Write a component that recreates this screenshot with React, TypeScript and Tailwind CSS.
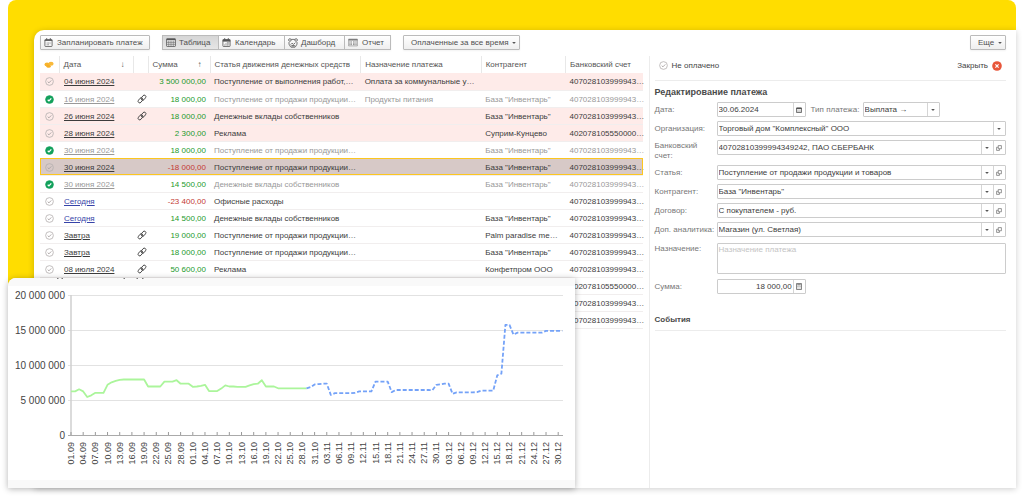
import React from 'react';
import { clsx } from 'clsx';

type RowState = 'overdue' | 'paid' | 'selected' | 'plain';

interface Payment {
  date: string;
  state: RowState;
  linked?: boolean;
  today?: boolean;
  sum: string;
  article: string;
  purpose?: string;
  partner?: string;
  account: string;
}

const ACC = '407028103999943…';
const ACC_CASH = '402078105550000…';
const SALES = 'Поступление от продажи продукции…';
const OWNERS = 'Денежные вклады собственников';
const BASE = 'База "Инвентарь"';

const payments: Payment[] = [
  { date: '04 июня 2024', state: 'overdue', sum: '3 500 000,00', article: 'Поступление от выполнения работ,…', purpose: 'Оплата за коммунальные у…', account: ACC },
  { date: '16 июня 2024', state: 'paid', linked: true, sum: '18 000,00', article: SALES, purpose: 'Продукты питания', partner: BASE, account: ACC },
  { date: '26 июня 2024', state: 'overdue', linked: true, sum: '18 000,00', article: OWNERS, partner: BASE, account: ACC },
  { date: '28 июня 2024', state: 'overdue', sum: '2 300,00', article: 'Реклама', partner: 'Суприм-Кунцево', account: ACC_CASH },
  { date: '30 июня 2024', state: 'paid', sum: '18 000,00', article: SALES, partner: BASE, account: ACC },
  { date: '30 июня 2024', state: 'selected', sum: '-18 000,00', article: SALES, partner: BASE, account: ACC },
  { date: '30 июня 2024', state: 'paid', sum: '14 500,00', article: OWNERS, partner: BASE, account: ACC },
  { date: 'Сегодня', state: 'plain', today: true, sum: '-23 400,00', article: 'Офисные расходы', account: ACC },
  { date: 'Сегодня', state: 'plain', today: true, sum: '14 500,00', article: OWNERS, partner: BASE, account: ACC },
  { date: 'Завтра', state: 'plain', linked: true, sum: '19 000,00', article: SALES, partner: 'Palm paradise me…', account: ACC },
  { date: 'Завтра', state: 'plain', linked: true, sum: '18 000,00', article: SALES, partner: BASE, account: ACC },
  { date: '08 июля 2024', state: 'plain', linked: true, sum: '50 600,00', article: 'Реклама', partner: 'Конфетпром ООО', account: ACC },
  { date: '', state: 'plain', sum: '', article: '', account: ACC_CASH },
  { date: '', state: 'plain', sum: '', article: '', account: ACC },
  { date: '', state: 'plain', sum: '', article: '', account: ACC },
];

function StatusIcon({ paid = false }: { paid?: boolean }) {
  return (
    <svg viewBox="0 0 10 10" className="size-[9px] shrink-0" aria-hidden="true">
      <circle cx="5" cy="5" r="4.3" fill={paid ? '#12a15c' : 'none'} stroke={paid ? '#12a15c' : '#b5b0b0'} strokeWidth="0.9" />
      <path d="M3 5.2 4.4 6.5 7 3.8" fill="none" stroke={paid ? '#fff' : '#a8a3a3'} strokeWidth={paid ? 1.4 : 1} />
    </svg>
  );
}

function CoinsIcon() {
  return (
    <svg viewBox="0 0 10 8" className="h-[8px] w-[10px]" aria-hidden="true">
      <ellipse cx="3" cy="3.4" rx="2.5" ry="1.9" fill="#f7b32d" />
      <ellipse cx="7" cy="2.7" rx="2.6" ry="2" fill="#f9b93a" />
      <ellipse cx="4.600" cy="5.200" rx="2.200" ry="1.500" fill="#f5ae26" />
    </svg>
  );
}

function ChainIcon() {
  return (
    <svg viewBox="0 0 10 10" className="size-[10px]" aria-hidden="true" fill="none" stroke="#444" strokeWidth=".9">
      <g transform="rotate(-52 5 5)">
        <rect x=".2" y="3" width="5.600" height="3.200" rx="1.600" />
        <rect x="4.200" y="3.800" width="5.600" height="3.200" rx="1.600" />
      </g>
    </svg>
  );
}

function CalendarIcon({ dark = false }: { dark?: boolean }) {
  return (
    <svg viewBox="0 0 10 10" className="size-[9px] shrink-0" aria-hidden="true">
      <rect x="1" y="1.800" width="8" height="7.700" rx="0.800" fill="none" stroke="#555" strokeWidth="0.900" />
      <path d={dark ? 'M.8 1.500H9.200V4H.8Z' : 'M.8 1.800H9.200V3.200H.8Z'} fill="#555" />
      <path d="M3 .2V2M7 .2V2" stroke="#555" strokeWidth="1.100" />
      <path d={dark ? 'M2.400 7.800H8M3.800 6.500H8M5.400 5.200H8' : 'M3 5.600H7.500M3 7.500H5.500'} stroke="#777" strokeWidth="0.900" strokeDasharray="1.100 .5" />
    </svg>
  );
}

function TableIcon() {
  return (
    <svg viewBox="0 0 11 10" className="h-[9px] w-[10px] shrink-0" aria-hidden="true">
      <rect x=".6" y=".8" width="9.800" height="8.600" rx=".6" fill="#eee" stroke="#555" strokeWidth=".9" />
      <path d="M.6 1.600H10.400" stroke="#555" strokeWidth="1.600" />
      <path d="M.6 4.800H10.400M.6 7H10.400M3 3V9.400M5.500 3V9.400M8 3V9.400" stroke="#666" strokeWidth=".7" />
    </svg>
  );
}

function DashboardIcon() {
  return (
    <svg viewBox="0 0 10 10" className="size-[10px] shrink-0" aria-hidden="true" fill="none" stroke="#555" strokeWidth=".8">
      <path d="M3.200 1.400H6.800M1 4V6.200M9 4V6.200M3 9.200H7" />
      <circle cx="1.900" cy="2" r="1.300" />
      <circle cx="8.100" cy="2" r="1.300" />
      <path d="M1 6.200 2.800 9.200M9 6.200 7.200 9.200M2.600 6.600 4 5.200 5.600 6.400 7.400 4.600" />
      <path d="M3.400 7.800H6.800" strokeWidth="1.200" />
    </svg>
  );
}

function ReportIcon() {
  return (
    <svg viewBox="0 0 11 10" className="h-[9px] w-[10px] shrink-0" aria-hidden="true">
      <path d="M.6 1.200H10.400V8.800H.6Z" fill="none" stroke="#888" strokeWidth=".7" />
      <path d="M.6 2H10.400" stroke="#777" strokeWidth="1.600" />
      <path d="M1.500 4.300H4.500M1.500 5.800H4.500M1.500 7.300H4.500M5.500 4.300H9.500M5.500 5.800H9.500M5.500 7.300H9.500" stroke="#777" strokeWidth=".9" strokeDasharray="1.200 .4" />
    </svg>
  );
}

function Caret() {
  return (
    <svg viewBox="0 0 4 2" className="h-[2px] w-1 shrink-0" aria-hidden="true">
      <path d="M.2 0H3.800L2 2Z" fill="#555" />
    </svg>
  );
}

function OpenIcon() {
  return (
    <svg viewBox="0 0 8 8" className="size-[6px]" aria-hidden="true" fill="none" stroke="#666" strokeWidth=".9">
      <path d="M3 .8H7.200V5H3Z" />
      <path d="M3 3H.8V7.200H4.600V5" />
    </svg>
  );
}

const buttonBase = 'flex h-[15px] items-center border border-[#bbb] bg-linear-to-b text-[#505050]';
const buttonLight = 'from-white to-[#efefef]';

function Toolbar() {
  return (
    <div className="flex items-center gap-3">
      <button className={clsx(buttonBase, buttonLight, 'w-[110px] gap-1 rounded-[1px] pl-[3px] shadow-xs')}>
        <CalendarIcon /> Запланировать платеж
      </button>
      <div className="flex shadow-xs">
        <button className={clsx(buttonBase, 'w-[57px] gap-[3px] from-[#d6d6d6] to-[#e6e6e6] pl-[3px]')}>
          <TableIcon /> Таблица
        </button>
        <button className={clsx(buttonBase, buttonLight, 'w-[66px] gap-1 border-l-0 pl-[3px]')}>
          <CalendarIcon dark /> Календарь
        </button>
        <button className={clsx(buttonBase, buttonLight, 'w-[60px] gap-[3px] border-l-0 pl-[3px]')}>
          <DashboardIcon /> Дашборд
        </button>
        <button className={clsx(buttonBase, buttonLight, 'w-[46px] gap-1 border-l-0 pl-[3px]')}>
          <ReportIcon /> Отчет
        </button>
      </div>
      <button className={clsx(buttonBase, buttonLight, 'w-[117px] justify-between rounded-[1px] pr-[3px] pl-[7px] shadow-xs')}>
        Оплаченные за все время <Caret />
      </button>
      <button className={clsx(buttonBase, buttonLight, 'ml-auto w-9 justify-between rounded-[1px] pr-[3px] pl-[7px] shadow-xs')}>
        Еще <Caret />
      </button>
    </div>
  );
}

function PaymentsTable() {
  const th = 'border-l border-[#e8e8e8] px-1 text-left font-normal text-[#555]';
  const cell = 'px-1 pt-[2px]';
  return (
    <table className="w-full table-fixed whitespace-nowrap">
      <colgroup>
        <col className="w-[19px]" />
        <col className="w-[74px]" />
        <col className="w-[15px]" />
        <col className="w-[62px]" />
        <col className="w-[25%]" />
        <col className="w-[20%]" />
        <col className="w-[14%]" />
        <col />
      </colgroup>
      <thead>
        <tr className="h-[17px]">
          <th className="pl-1" aria-label="Статус"><CoinsIcon /></th>
          <th className={th}>
            <span className="flex justify-between pr-1">Дата <span>↓</span></span>
          </th>
          <th className={th} aria-label="Связь" />
          <th className={th}>
            <span className="flex justify-between pr-1">Сумма <span>↑</span></span>
          </th>
          <th className={th}>Статья движения денежных средств</th>
          <th className={th}>Назначение платежа</th>
          <th className={th}>Контрагент</th>
          <th className={th}>Банковский счет</th>
        </tr>
      </thead>
      <tbody>
        {payments.map((p, i) => (
          <tr
            key={i}
            className={clsx(
              'h-[17px] border-b border-[#f1eeee]',
              p.state === 'overdue' && 'bg-[#feebe9]',
              p.state === 'selected' && 'bg-[#d7c9c7] outline -outline-offset-1 outline-[#fcc61f]',
              p.state === 'paid' ? 'text-[#999]' : 'text-[#3c3c3c]'
            )}
          >
            <td className="pt-px pl-[5px]">{p.date && <StatusIcon paid={p.state === 'paid'} />}</td>
            <td className="pt-[2px] pl-[5px]">
              {p.date && (
                <a href="#" className={clsx('underline', p.today && 'text-[#3643a8]')}>{p.date}</a>
              )}
            </td>
            <td className="pt-px pl-1">{p.linked && <ChainIcon />}</td>
            <td className={clsx('pt-[2px] pr-1 text-right', p.sum.startsWith('-') ? 'text-[#c43a35]' : 'text-[#249a2c]')}>{p.sum}</td>
            <td className={cell}>{p.article}</td>
            <td className={cell}>{p.purpose}</td>
            <td className={cell}>{p.partner}</td>
            <td className={cell}>{p.account}</td>
          </tr>
        ))}
      </tbody>
    </table>
  );
}

const box = 'flex h-[15px] rounded-[1px] border border-[#ccc] bg-white text-[#3c3c3c]';
const addon = 'flex w-3 shrink-0 items-center justify-center border-l border-[#d5d5d5]';

function SelectField({ id, value, openable = false, className }: { id: string; value: string; openable?: boolean; className?: string }) {
  return (
    <div className={clsx(box, className)}>
      <select id={id} className="min-w-0 flex-1 appearance-none pl-px outline-none">
        <option>{value}</option>
      </select>
      <span className={clsx(addon, 'pointer-events-none')}><Caret /></span>
      {openable && (
        <button type="button" className={addon} aria-label="Открыть"><OpenIcon /></button>
      )}
    </div>
  );
}

const fields = [
  { id: 'org', label: 'Организация:', value: 'Торговый дом "Комплексный" ООО', openable: false },
  { id: 'bank', label: 'Банковский счет:', value: '40702810399994349242, ПАО СБЕРБАНК', openable: true, tall: true },
  { id: 'article', label: 'Статья:', value: 'Поступление от продажи продукции и товаров', openable: true },
  { id: 'partner', label: 'Контрагент:', value: 'База "Инвентарь"', openable: true },
  { id: 'contract', label: 'Договор:', value: 'С покупателем - руб.', openable: true },
  { id: 'extra', label: 'Доп. аналитика:', value: 'Магазин (ул. Светлая)', openable: true },
];

function PaymentForm() {
  const row = 'grid grid-cols-[62px_1fr] items-start';
  const label = 'pt-[3px] text-[#777]';
  const labelTop = 'pt-px text-[#777]';
  return (
    <aside className="border-l border-[#ececec] pl-[5px]">
      <div className="flex h-[25px] items-center justify-between border-b border-[#ececec] pr-1 pb-[5px] pl-1 text-[#444]">
        <span className="flex items-center gap-1"><StatusIcon /> Не оплачено</span>
        <button className="flex items-center gap-1">
          Закрыть
          <svg viewBox="0 0 10 10" className="size-[10px]" aria-hidden="true">
            <circle cx="5" cy="5" r="4.800" fill="#e8563a" />
            <path d="M3.400 3.400 6.600 6.600M6.600 3.400 3.400 6.600" stroke="#fff" strokeWidth="1.200" />
          </svg>
        </button>
      </div>

      <h2 className="pt-[5px] text-[9px] leading-3 font-bold text-[#4a4a4a]">Редактирование платежа</h2>

      <form className="mt-1">
        <div className="flex flex-col gap-1">
          <div className={row}>
            <label htmlFor="date" className={label}>Дата:</label>
            <div className="flex">
              <div className={clsx(box, 'w-[89px]')}>
                <input id="date" defaultValue="30.06.2024" className="min-w-0 flex-1 pl-px outline-none" />
                <button type="button" className={addon} aria-label="Выбрать дату">
                  <svg viewBox="0 0 6 6" className="size-[6px]" aria-hidden="true">
                    <path d="M.5 1H5.500V5.500H.5Z" fill="none" stroke="#555" strokeWidth=".8" />
                    <path d="M.5 1.400H5.500" stroke="#555" strokeWidth="1.400" />
                    <path d="M1.400 3.300H4.600M1.400 4.500H4.600" stroke="#777" strokeWidth=".6" strokeDasharray=".8 .4" />
                  </svg>
                </button>
              </div>
              <label htmlFor="kind" className={clsx(label, 'w-[57px] pl-[5px] whitespace-nowrap')}>Тип платежа:</label>
              <SelectField id="kind" value="Выплата →" className="w-[77px]" />
            </div>
          </div>
          {fields.map((f) => (
            <div key={f.id} className={row}>
              <label htmlFor={f.id} className={f.tall ? labelTop : label}>{f.label}</label>
              <SelectField id={f.id} value={f.value} openable={f.openable} />
            </div>
          ))}
        </div>
        <div className="mt-[6px] flex flex-col gap-[5px]">
          <div className={row}>
            <label htmlFor="purpose" className={labelTop}>Назначение:</label>
            <textarea
              id="purpose"
              placeholder="Назначение платежа"
              className="block h-[31px] w-full resize-none rounded-[1px] border border-[#ccc] pt-px pl-px outline-none placeholder:text-[#c4c4c4]"
            />
          </div>
          <div className={row}>
            <label htmlFor="sum" className={label}>Сумма:</label>
            <div className={clsx(box, 'w-[89px]')}>
              <input id="sum" defaultValue="18 000,00" className="min-w-0 flex-1 pr-px text-right outline-none" />
              <button type="button" className={addon} aria-label="Калькулятор">
                <svg viewBox="0 0 6 7" className="h-[7px] w-[6px]" aria-hidden="true">
                  <path d="M.5.500H5.500V6.500H.5Z" fill="none" stroke="#666" strokeWidth=".8" />
                  <path d="M1.200 1.800H4.800" stroke="#666" strokeWidth="1" />
                  <path d="M1.400 3.500H4.600M1.400 5H4.600" stroke="#777" strokeWidth=".7" strokeDasharray=".8 .4" />
                </svg>
              </button>
            </div>
          </div>
        </div>
      </form>

      <h2 className="mt-5 border-b border-[#ececec] pb-1 text-[8px] leading-3 font-bold text-[#4a4a4a]">События</h2>
    </aside>
  );
}

// Balance per day in millions, starting from 01.09
const fact = [
  6.3, 6.3, 6.6, 6.3, 5.5, 5.75, 6.1, 6.1, 6.1, 7.25, 7.6, 7.8, 7.95, 8, 8, 8, 8, 8, 8, 7, 7, 7, 7, 7.7, 7.7, 7.7, 7.9, 7.4, 7.4, 7.4,
  6.95, 7, 7.1, 7.25, 6.35, 6.35, 6.35, 6.7, 7.15, 7, 7, 6.95, 6.95, 6.95, 7.15, 7.35, 7.4, 7.9, 7, 7, 7, 6.75, 6.75, 6.75, 6.75, 6.75, 6.75, 6.75, 6.75,
];
const FORECAST_START = 58;
const forecast = [
  6.75, 6.9, 7.3, 7.35, 7.4, 7.4, 5.8, 6.05, 6.05, 6.05, 6.05, 6.05, 6.1, 6.3, 6.3, 6.3, 6.3, 7.7, 7.7, 7.7, 7.7, 6.2, 6.5, 6.5, 6.5, 6.5, 6.5, 6.5, 6.5, 6.5, 6.5, 6.45,
  7.25, 7.3, 7.4, 7.4, 5.95, 6.15, 6.15, 6.15, 6.15, 6.15, 6.2, 6.4, 6.4, 6.4, 6.4, 8.6, 8.85, 15.8, 15.8, 14.4, 14.7, 14.7, 14.7, 14.7, 14.7, 14.7, 14.7, 14.95, 14.95, 14.95, 14.95, 14.95,
];

const dateLabels = [
  '01.09', '04.09', '07.09', '10.09', '13.09', '16.09', '19.09', '22.09', '25.09', '28.09',
  '01.10', '04.10', '07.10', '10.10', '13.10', '16.10', '19.10', '22.10', '25.10', '28.10', '31.10',
  '03.11', '06.11', '09.11', '12.11', '15.11', '18.11', '21.11', '24.11', '27.11', '30.11',
  '03.12', '06.12', '09.12', '12.12', '15.12', '18.12', '21.12', '24.12', '27.12', '30.12',
];
const levels = ['0', '5 000 000', '10 000 000', '15 000 000', '20 000 000'];

const dayX = (day: number) => 63 + day * 4.06;
const valueY = (millions: number) => 157 - millions * 7;
const toPoints = (values: number[], start: number) =>
  values.map((v, i) => `${dayX(start + i).toFixed(1)},${(valueY(v) + 0.5).toFixed(1)}`).join(' ');

function BalanceChart() {
  return (
    <section className="absolute bottom-0 left-0 w-9/16 overflow-hidden rounded-tl-lg bg-white shadow-[0_1px_6px_rgba(0,0,0,0.3)]">
      <svg viewBox="0 0 567 210" className="block w-full" role="img" aria-label="Остаток денежных средств">
        <path d="M0 0H567V8H0ZM0 202H567V210H0Z" fill="#f9f9f9" />
        {/* lower edge of the scrolled-away title */}
        <path d="M49 .5H50.500M53.500 .5H55M115.500 .5H117M128.500 .5H130M134 .5H135.500" stroke="#777" />
        {levels.map((text, i) => (
          <g key={text}>
            <path d={`M60 ${valueY(i * 5)}.5H555`} stroke={i === 0 ? '#aaa' : '#e2e2e2'} />
            <text x="57" y={valueY(i * 5) + 4} textAnchor="end" className="text-[10px]" fill="#444">{text}</text>
          </g>
        ))}
        <path d="M63 17V157" stroke="#cfcfcf" strokeWidth="1.500" />
        {dateLabels.map((text, i) => {
          const x = dayX(i * 3);
          return (
            <g key={text}>
              <path d={`M${x} 154V157`} stroke="#999" />
              <text transform={`translate(${x + 3} 164) rotate(-90)`} textAnchor="end" className="text-[9px]" fill="#444">{text}</text>
            </g>
          );
        })}
        <polyline points={toPoints(fact, 0)} fill="none" stroke="#abf59b" strokeWidth="1.800" strokeLinejoin="round" />
        <polyline points={toPoints(forecast, FORECAST_START)} fill="none" stroke="#74a2f8" strokeWidth="1.800" strokeDasharray="4 2" strokeLinejoin="round" />
      </svg>
    </section>
  );
}

export default function App() {
  return (
    <div className="overflow-hidden bg-white px-2 pb-[9px] font-['Liberation_Sans',Arial,sans-serif] text-[8px] leading-[10px]">
      <div className="relative rounded-t-lg bg-[#ffdd00] pt-[30px] pl-[26px]">
        <main className="min-h-[458px] rounded-tl-[10px] bg-white pt-[5px] pr-[10px] pl-[6px] shadow-[0_1px_6px_rgba(0,0,0,0.2)]">
          <Toolbar />
          <div className="mt-[6px] grid min-h-[432px] grid-cols-[63%_37%]">
            <div className="pr-[6px]">
              <PaymentsTable />
            </div>
            <PaymentForm />
          </div>
        </main>
        <BalanceChart />
      </div>
    </div>
  );
}
